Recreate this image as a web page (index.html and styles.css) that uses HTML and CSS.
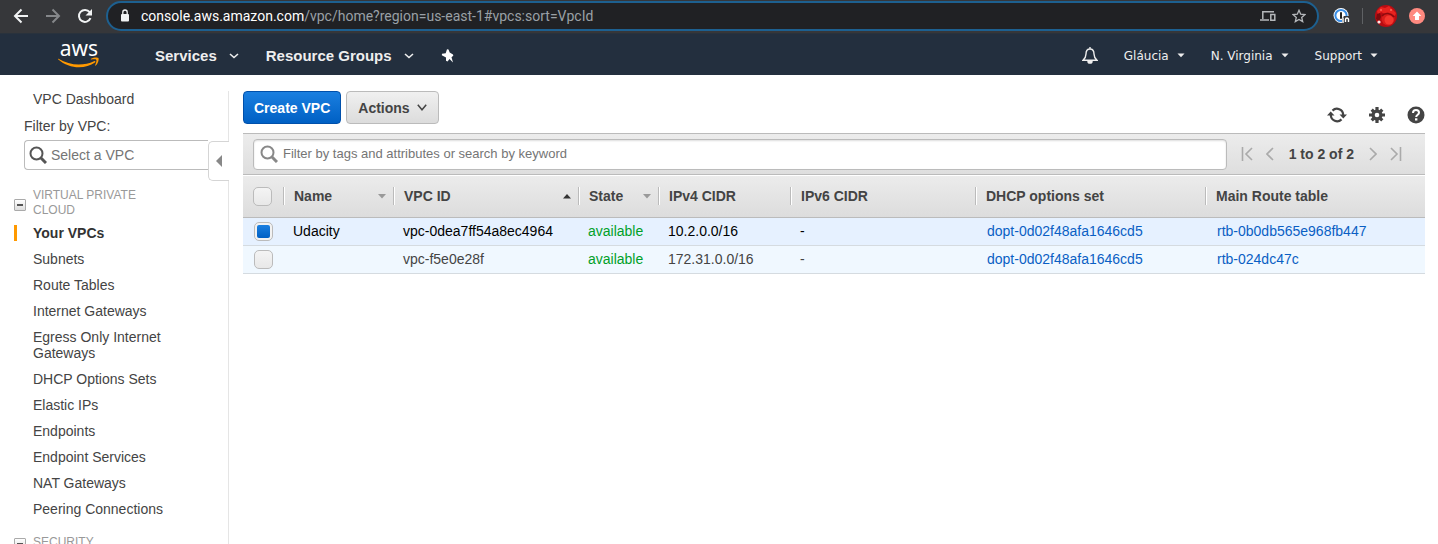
FILE: index.html
```html
<!DOCTYPE html>
<html lang="en">
<head>
<meta charset="utf-8">
<title>VPC Management Console</title>
<link rel="stylesheet" href="styles.css">
</head>
<body>
<div class="browser-bar">
  <div class="browser-nav">
    <button class="icon-btn" aria-label="Back"><svg width="16" height="16" viewBox="0 0 16 16" fill="none" stroke="#f1f3f4" stroke-width="2"><path d="M15 8H2.500M8.500 1.500 2 8l6.500 6.500"/></svg></button>
    <button class="icon-btn" aria-label="Forward"><svg width="16" height="16" viewBox="0 0 16 16" fill="none" stroke="#85878a" stroke-width="2"><path d="M1 8h12.500M7.500 1.500 14 8l-6.500 6.500"/></svg></button>
    <button class="icon-btn" aria-label="Reload"><svg width="16" height="16" viewBox="0 0 16 16" fill="none" stroke="#f1f3f4" stroke-width="2"><path d="M13.500 10.200A6 6 0 1 1 12.700 4.200"/><path d="M15 1v6.500H8.500z" fill="#f1f3f4" stroke="none"/></svg></button>
  </div>
  <div class="address">
    <svg width="10" height="13" viewBox="0 0 10 13"><rect x="1" y="5" width="8" height="7.500" rx="1" fill="#f1f3f4"/><path d="M2.800 6V3.200a2.200 2.200 0 0 1 4.400 0V6" fill="none" stroke="#f1f3f4" stroke-width="1.300"/></svg>
    <span class="url"><span class="host">console.aws.amazon.com</span>/vpc/home?region=us-east-1#vpcs:sort=VpcId</span>
    <button class="icon-btn" aria-label="Send to device"><svg width="16" height="12" viewBox="0 0 16 12" fill="none" stroke="#b5b8bb" stroke-width="1.500"><path d="M14 1.800H2.800V9M0 10h9M10.800 4.500h4v5.700h-4z"/></svg></button>
    <button class="icon-btn" aria-label="Bookmark"><svg width="14" height="14" viewBox="0 0 14 14" fill="none" stroke="#b5b8bb" stroke-width="1.300"><path d="m7 1.300 1.700 3.900 4.200.4-3.200 2.800 1 4.200L7 10.400l-3.700 2.200 1-4.200L1.100 5.600l4.200-.4z"/></svg></button>
  </div>
  <div class="extensions">
    <button class="icon-btn" aria-label="Password manager"><svg width="17" height="16" viewBox="0 0 17 16"><circle cx="8" cy="7.500" r="7.500" fill="#fff"/><circle cx="8" cy="7.500" r="5.600" fill="#fff" stroke="#3a8ee6" stroke-width="2"/><rect x="7" y="4" width="2" height="7" rx="1" fill="#222"/><path d="M9 10.500 11 8h6v8H9z" fill="#36373a"/><path d="M10 9.500V15M12.500 14v-2.500a1.500 1.500 0 0 1 3 0V14" fill="none" stroke="#fff" stroke-width="1.400"/></svg></button>
    <span class="ext-divider"></span>
    <button class="icon-btn" aria-label="Profile"><svg width="22" height="22" viewBox="0 0 22 22"><circle cx="11" cy="11" r="11" fill="#b80c12"/><path d="M2 6 6 2l4 1 4-2 3 3 4 4-1 3-5-3-5 1-4-2-3 3z" fill="#e8231f"/><path d="M2 9 5 8l1 4-2 4-3-2z" fill="#7c0a0d"/><circle cx="13" cy="14" r="6.500" fill="#d91d1b"/><circle cx="14" cy="15" r="4.500" fill="#f5362d"/><path d="M7 11c3-4 9-3 12 1" fill="none" stroke="#8d0a0e" stroke-width="1.500"/><circle cx="6" cy="5" r="1" fill="#ff6a5e"/><circle cx="16" cy="5" r="1" fill="#ff6a5e"/><circle cx="4" cy="17" r="1.600" fill="#ffe5e5"/></svg></button>
    <button class="icon-btn" aria-label="Update"><svg width="16" height="16" viewBox="0 0 16 16"><circle cx="8" cy="8" r="8" fill="#ff8a80"/><path d="M8 3.500 12.300 8H10v4H6V8H3.700z" fill="#fff"/></svg></button>
  </div>
</div>

<header class="console-nav">
  <a class="logo" href="#" aria-label="AWS home"><span class="logo-text">aws</span><svg class="smile" width="42" height="11" viewBox="0 0 42 11"><path d="M.5 1.800C12 9 26 9 36 4.200c1.200-.5 2 .5 1 1.300C27 12.500 11 12 .3 2.500c-.4-.5-.2-1 .2-.7z" fill="#f90"/><path d="M33 1.700c2.500-1.500 6.600-1.700 7.400-.7.800 1.100-.3 5.500-2.600 7.500-.5.400-.8.200-.6-.4.900-2.300 1.600-4.400 1.100-5.200-.6-.8-2.900-.6-4.900-.4-.6 0-.8-.4-.4-.8z" fill="#f90"/></svg></a>
  <nav class="primary">
    <button class="menu">Services <svg width="10" height="6" viewBox="0 0 10 6"><path d="m1 1 4 3.500L9 1" fill="none" stroke="#eee" stroke-width="1.600"/></svg></button>
    <button class="menu">Resource Groups <svg width="10" height="6" viewBox="0 0 10 6"><path d="m1 1 4 3.500L9 1" fill="none" stroke="#eee" stroke-width="1.600"/></svg></button>
    <button class="icon-btn" aria-label="Pin shortcuts"><svg width="13" height="14" viewBox="0 0 13 14" fill="#fff"><path d="M6 .3 7.500.5 8.700 3.500l3.300 2 .3 1.300-1.800 1.500L12 13.500 8.500 10 6.500 12.500 5 11.800V8.500L.8 6.300 1 4.800l3.700-.6z"/></svg></button>
  </nav>
  <nav class="account">
    <button class="icon-btn" aria-label="Notifications"><svg width="16" height="17" viewBox="0 0 16 17" fill="none" stroke="#eee" stroke-width="1.400"><path d="M8 0v2M8 2C5 2 4 4.500 4 7c0 3-1 4.500-3 6.300h14C13 11.500 12 10 12 7c0-2.500-1-5-4-5z"/><path d="M6 14.500a2 1.600 0 0 0 4 0z" fill="#eee"/></svg></button>
    <button class="menu-small">Gláucia <svg width="8" height="5" viewBox="0 0 8 5"><path d="M.5.500h7L4 4.300z" fill="#eee"/></svg></button>
    <button class="menu-small">N. Virginia <svg width="8" height="5" viewBox="0 0 8 5"><path d="M.5.500h7L4 4.300z" fill="#eee"/></svg></button>
    <button class="menu-small">Support <svg width="8" height="5" viewBox="0 0 8 5"><path d="M.5.500h7L4 4.300z" fill="#eee"/></svg></button>
  </nav>
</header>

<div class="page">
  <aside class="sidebar">
    <a class="side-link" href="#">VPC Dashboard</a>
    <label class="filter-label" for="vpc-filter">Filter by VPC:</label>
    <div class="vpc-filter">
      <svg width="18" height="18" viewBox="0 0 18 18" fill="none" stroke="#555"><circle cx="7.500" cy="7.500" r="6" stroke-width="2"/><path d="m12 12 5 5" stroke-width="3"/></svg>
      <input id="vpc-filter" type="text" placeholder="Select a VPC">
    </div>
    <button class="collapse" aria-label="Collapse sidebar"><svg width="6" height="12" viewBox="0 0 6 12"><path d="M6 0v12L0 6z" fill="#888"/></svg></button>
    <div class="group-title"><button class="toggle" aria-label="Collapse group"></button><span>VIRTUAL PRIVATE CLOUD</span></div>
    <ul class="side-list">
      <li><a class="side-link current" href="#">Your VPCs</a></li>
      <li><a class="side-link" href="#">Subnets</a></li>
      <li><a class="side-link" href="#">Route Tables</a></li>
      <li><a class="side-link" href="#">Internet Gateways</a></li>
      <li><a class="side-link" href="#">Egress Only Internet Gateways</a></li>
      <li><a class="side-link" href="#">DHCP Options Sets</a></li>
      <li><a class="side-link" href="#">Elastic IPs</a></li>
      <li><a class="side-link" href="#">Endpoints</a></li>
      <li><a class="side-link" href="#">Endpoint Services</a></li>
      <li><a class="side-link" href="#">NAT Gateways</a></li>
      <li><a class="side-link" href="#">Peering Connections</a></li>
    </ul>
    <div class="group-title security"><button class="toggle" aria-label="Collapse group"></button><span>SECURITY</span></div>
  </aside>

  <main class="content">
    <div class="actions">
      <button class="btn primary-btn">Create VPC</button>
      <button class="btn">Actions <svg width="10" height="7" viewBox="0 0 10 7"><path d="m.8.800 4.200 5 4.200-5" fill="none" stroke="#444" stroke-width="1.500"/></svg></button>
      <div class="tools">
        <button class="icon-btn" aria-label="Refresh"><svg width="20" height="18" viewBox="0 0 20 18"><path d="M5.500 4.600A6.300 6.300 0 0 1 16.200 9M14.500 13.400A6.300 6.300 0 0 1 3.800 9" fill="none" stroke="#444" stroke-width="2.200"/><path d="M12.500 8.500H20L16.300 12.500zM0 9.500h7.500L3.700 5.500z" fill="#444"/></svg></button>
        <button class="icon-btn" aria-label="Settings"><svg width="16" height="18" viewBox="0 0 16 18"><g stroke="#444" stroke-width="3.200"><path d="M8 1v16M0 9h16M2.700 3.700l10.600 10.600M13.300 3.700 2.700 14.300"/></g><circle cx="8" cy="9" r="5.500" fill="#444"/><circle cx="8" cy="9" r="2.300" fill="#fff"/></svg></button>
        <button class="icon-btn" aria-label="Help"><svg width="18" height="18" viewBox="0 0 18 18"><circle cx="9" cy="9" r="8.500" fill="#444"/><path d="M6 7c0-4 6-3.700 6-.3C12 8.700 9.200 8.700 9.200 11" fill="none" stroke="#fff" stroke-width="2"/><rect x="8" y="12.300" width="2.400" height="2.200" fill="#fff"/></svg></button>
      </div>
    </div>

    <div class="toolbar">
      <div class="search">
        <svg width="18" height="18" viewBox="0 0 18 18" fill="none" stroke="#888"><circle cx="7.500" cy="7.500" r="6" stroke-width="2"/><path d="m12 12 5 5" stroke-width="3"/></svg>
        <input type="text" aria-label="Filter VPCs" placeholder="Filter by tags and attributes or search by keyword">
      </div>
      <div class="pager">
        <button class="icon-btn" aria-label="First page"><svg width="12" height="14" viewBox="0 0 12 14" fill="none" stroke="#aaa" stroke-width="1.600"><path d="M1.500 0v14M11 1 5 7l6 6"/></svg></button>
        <button class="icon-btn" aria-label="Previous page"><svg width="8" height="14" viewBox="0 0 8 14" fill="none" stroke="#aaa" stroke-width="1.600"><path d="M7 1 1 7l6 6"/></svg></button>
        <span class="range">1 to 2 of 2</span>
        <button class="icon-btn" aria-label="Next page"><svg width="8" height="14" viewBox="0 0 8 14" fill="none" stroke="#aaa" stroke-width="1.600"><path d="m1 1 6 6-6 6"/></svg></button>
        <button class="icon-btn" aria-label="Last page"><svg width="12" height="14" viewBox="0 0 12 14" fill="none" stroke="#aaa" stroke-width="1.600"><path d="m1 1 6 6-6 6M10.500 0v14"/></svg></button>
      </div>
    </div>

    <table class="grid">
      <colgroup><col class="c-check"><col class="c-name"><col class="c-id"><col class="c-state"><col class="c-v4"><col class="c-v6"><col class="c-dhcp"><col></colgroup>
      <thead>
        <tr>
          <th class="check"><input type="checkbox" aria-label="Select all"></th>
          <th><div class="head">Name <svg width="8" height="5" viewBox="0 0 8 5"><path d="M0 0h8L4 4.500z" fill="#999"/></svg></div></th>
          <th><div class="head">VPC ID <svg width="8" height="5" viewBox="0 0 8 5"><path d="M0 4.500h8L4 0z" fill="#333"/></svg></div></th>
          <th><div class="head">State <svg width="8" height="5" viewBox="0 0 8 5"><path d="M0 0h8L4 4.500z" fill="#999"/></svg></div></th>
          <th><div class="head">IPv4 CIDR</div></th>
          <th><div class="head">IPv6 CIDR</div></th>
          <th><div class="head">DHCP options set</div></th>
          <th><div class="head">Main Route table</div></th>
        </tr>
      </thead>
      <tbody>
        <tr class="selected">
          <td class="check"><input type="checkbox" aria-label="Select Udacity" checked></td>
          <td>Udacity</td><td>vpc-0dea7ff54a8ec4964</td><td class="ok">available</td><td>10.2.0.0/16</td><td>-</td>
          <td class="linked"><a href="#">dopt-0d02f48afa1646cd5</a></td><td class="linked"><a href="#">rtb-0b0db565e968fb447</a></td>
        </tr>
        <tr>
          <td class="check"><input type="checkbox" aria-label="Select vpc-f5e0e28f"></td>
          <td></td><td>vpc-f5e0e28f</td><td class="ok">available</td><td>172.31.0.0/16</td><td>-</td>
          <td class="linked"><a href="#">dopt-0d02f48afa1646cd5</a></td><td class="linked"><a href="#">rtb-024dc47c</a></td>
        </tr>
      </tbody>
    </table>
  </main>
</div>
</body>
</html>
```
FILE: styles.css
```css
* { box-sizing: border-box; }

body {
  margin: 0;
  height: 100vh;
  display: flex;
  flex-direction: column;
  overflow: hidden;
  background: #fff;
  color: #444;
  font: 14px/16px "Liberation Sans", Arial, sans-serif;
}

a { color: #0a5fc4; text-decoration: none; }
svg { display: block; flex: none; }
button { font: inherit; color: inherit; cursor: pointer; }
input { font: inherit; }
.icon-btn { padding: 0; border: 0; background: none; }

/* Browser toolbar */
.browser-bar {
  flex: none;
  display: flex;
  align-items: center;
  height: 34px;
  padding: 0 13px 2px;
  background: #36373a;
  border-bottom: 1px solid #29323c;
}
.browser-nav { display: flex; gap: 16px; margin-right: 13px; }
.address {
  flex: 1;
  display: flex;
  align-items: center;
  gap: 16px;
  height: 30px;
  padding: 0 11px 0 12px;
  border: 2px solid #1d6090;
  border-radius: 15px;
  background: #202124;
}
.url {
  flex: 1;
  margin-left: -5px;
  color: #9aa0a6;
  font: 14px/18px Roboto, sans-serif;
  white-space: nowrap;
}
.host { color: #fff; }
.extensions { display: flex; align-items: center; gap: 12px; margin-left: 14px; }
.ext-divider { width: 1px; height: 16px; background: #5f6164; }

/* Console navigation */
.console-nav {
  flex: none;
  display: flex;
  align-items: center;
  height: 41px;
  padding: 2px 60px 0 58px;
  background: #232f3e;
  color: #eee;
}
.logo { display: flex; flex-direction: column; align-items: center; width: 42px; padding-bottom: 4px; color: #fff; }
.logo-text { font: 21px/16px "Noto Sans", sans-serif; }
.smile { margin-top: 1px; }
.primary { display: flex; align-items: center; gap: 27px; margin-left: 55px; }
.menu, .menu-small { display: flex; align-items: center; padding: 0; border: 0; background: none; }
.menu { gap: 12px; font-size: 15px; line-height: 20px; font-weight: bold; }
.account { display: flex; align-items: center; gap: 26px; margin-left: auto; }
.menu-small { gap: 8px; font: 12px/16px "DejaVu Sans", Verdana, sans-serif; }

/* Page */
.page { flex: 1; display: flex; min-height: 0; }

.sidebar {
  position: relative;
  flex: none;
  width: 229px;
  padding-top: 11px;
  background: linear-gradient(#e5e5e5, #e5e5e5) 228px 16px / 1px 100% no-repeat;
}
.side-link {
  display: block;
  padding: 5px 50px 5px 33px;
  color: #444;
}
.current { color: #333; font-weight: bold; position: relative; }
.current::before {
  content: "";
  position: absolute;
  left: 14px;
  top: 5px;
  width: 3px;
  height: 16px;
  background: #f90;
}
.filter-label { display: block; margin: 6px 0 6px 24px; }
.vpc-filter {
  display: flex;
  align-items: center;
  gap: 4px;
  height: 30px;
  margin: 0 21px 0 24px;
  padding-left: 4px;
  border: 1px solid #bbb;
  border-right: 0;
  border-radius: 4px 0 0 4px;
}
.vpc-filter input { flex: 1; min-width: 0; padding: 0; border: 0; outline: 0; background: none; }
.vpc-filter input::placeholder { color: #757575; }
.collapse {
  position: absolute;
  right: 0;
  top: 66px;
  display: flex;
  align-items: center;
  width: 21px;
  height: 40px;
  padding: 0 0 0 7px;
  border: 1px solid #d5d5d5;
  border-right: 0;
  border-radius: 5px 0 0 5px;
  background: #fff;
}
.group-title {
  display: flex;
  align-items: center;
  gap: 7px;
  margin: 18px 60px 2px 14px;
  color: #999;
  font-size: 12px;
  line-height: 15px;
}
.security { margin-top: 12px; }
.toggle {
  flex: none;
  width: 12px;
  height: 12px;
  margin-top: 4px;
  padding: 0;
  border: 1px solid #aaa;
  border-radius: 1px;
  background: linear-gradient(#555, #555) 2px 4px / 6px 2px no-repeat, linear-gradient(#fff, #ddd);
}
.side-list { margin: 0; padding: 0; list-style: none; }

.content { flex: 1; min-width: 0; padding: 16px 13px 0 14px; }

.actions { display: flex; align-items: flex-end; gap: 5px; margin-bottom: 9px; }
.btn {
  display: flex;
  align-items: center;
  gap: 7px;
  height: 33px;
  padding: 0 11px;
  border: 1px solid #bbb;
  border-radius: 4px;
  background: linear-gradient(#f0f0f0, #dcdcdc);
  color: #444;
  font-weight: bold;
}
.primary-btn { padding: 0 10px; border-color: #0050ab; background: linear-gradient(#1a7fe0, #0060c4); color: #fff; }
.tools { display: flex; align-items: center; gap: 22px; margin-left: auto; }

.toolbar {
  display: flex;
  align-items: center;
  height: 42px;
  padding: 0 23px 0 10px;
  border-top: 1px solid #bbb;
  border-bottom: 1px solid #bbb;
  background: linear-gradient(#ececec, #dedede);
}
.search {
  flex: 1;
  display: flex;
  align-items: center;
  gap: 5px;
  height: 31px;
  padding-left: 6px;
  border: 1px solid #bbb;
  border-radius: 4px;
  background: #fff;
  box-shadow: inset 0 1px 2px #ddd;
}
.search input { flex: 1; padding: 0; border: 0; outline: 0; background: none; font-size: 13px; }
.search input::placeholder { color: #757575; }
.pager { display: flex; align-items: center; gap: 13px; margin-left: 14px; color: #444; }
.range { margin: 0 2px; font-weight: bold; }

.grid { width: 100%; table-layout: fixed; border-collapse: separate; border-spacing: 0; }
.c-check { width: 40px; }
.c-name { width: 110px; }
.c-id, .c-v6 { width: 185px; }
.c-state { width: 80px; }
.c-v4 { width: 132px; }
.c-dhcp { width: 230px; }
.grid thead tr { background: linear-gradient(#ececec, #dcdcdc); }
.grid th {
  height: 43px;
  padding: 0 0 1px;
  border-top: 1px solid #fff;
  border-bottom: 1px solid #bbb;
  text-align: left;
}
.head {
  display: flex;
  align-items: center;
  justify-content: space-between;
  height: 18px;
  padding: 0 7px 0 10px;
  border-left: 1px solid #bbb;
  box-shadow: inset 1px 0 #fff;
}
.grid td { height: 28px; padding: 0 10px 2px; border-bottom: 1px solid #d5dbe0; background: #f0f8ff; white-space: nowrap; }
.grid .selected td { background: #e6f1ff; color: #000; }
.grid .ok, .grid .selected .ok { color: #00a028; }
.grid .linked { padding-left: 12px; }
.grid th.check { padding: 0 0 0 10px; }
.grid td.check { padding: 0 0 0 11px; }
.check input {
  appearance: none;
  display: block;
  width: 19px;
  height: 19px;
  margin: 0;
  border: 1px solid #bbb;
  border-radius: 5px;
  background: linear-gradient(#f4f4f4, #e8e8e8);
}
.check input:checked { border: 1px solid #bbb; background: linear-gradient(#1a7fe0, #0060c4) content-box, #f2f2f2; padding: 2px; }
```
